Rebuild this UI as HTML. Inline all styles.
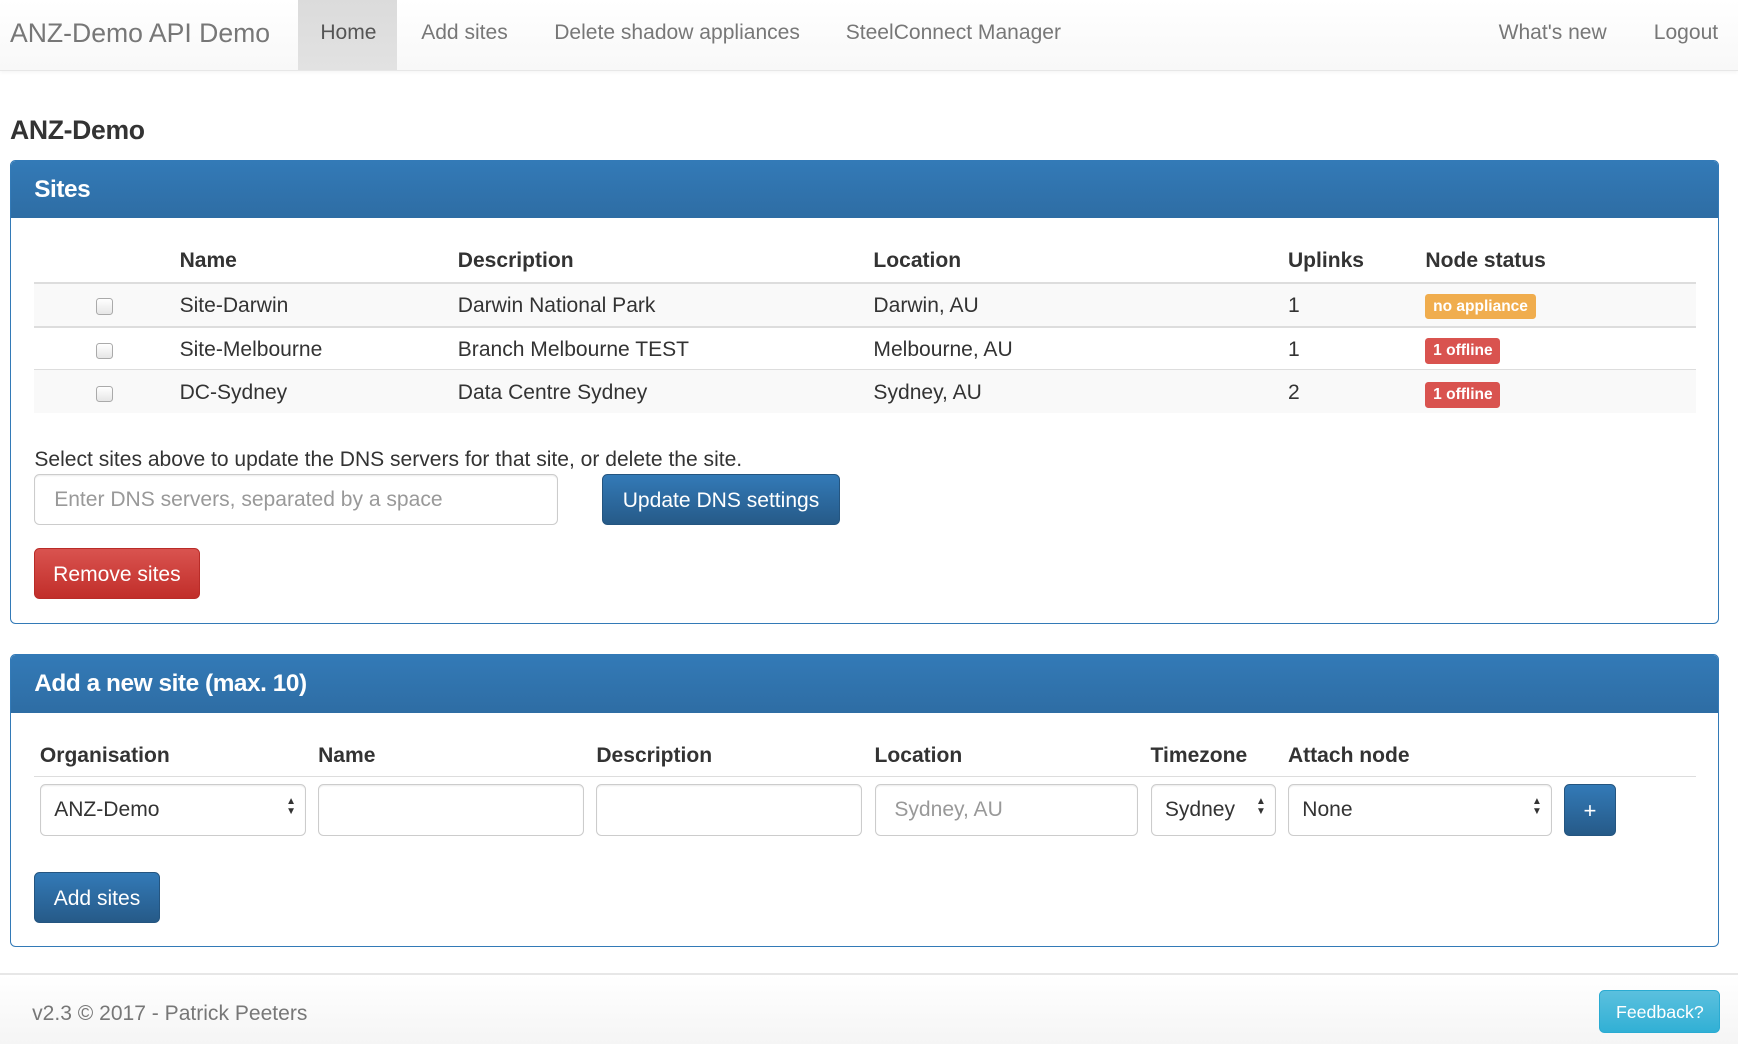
<!DOCTYPE html>
<html><head><meta charset="utf-8"><style>
html,body{margin:0;padding:0;}
body{width:1568px;height:940px;zoom:1.10842;font-family:"Liberation Sans",Arial,sans-serif;color:#333;font-size:19px;position:relative;overflow:hidden;background:#fff}
.a{position:absolute;white-space:nowrap}
.nav{position:absolute;left:0;top:0;width:1568px;height:63px;background:linear-gradient(#fff,#f8f8f8);border-bottom:1px solid #e7e7e7;box-shadow:0 1px 4px rgba(0,0,0,.06)}
.nav .a{top:19px;color:#777}
.panel{position:absolute;left:9px;width:1540px;border:1px solid #337ab7;border-radius:5px;overflow:hidden}
.ph{height:52px;background:linear-gradient(#337ab7,#2e6da4);color:#fff;font-size:22px;font-weight:bold;line-height:53px;padding-left:21px;letter-spacing:-0.4px}
.th{font-weight:bold}
.row{position:absolute;left:31px;width:1499px;height:39px;border-top:2px solid #ddd}
.cb{position:absolute;width:13px;height:13px;border:1px solid #aaa;border-radius:3px;background:linear-gradient(#fff,#e6e6e6)}
.lbl{position:absolute;color:#fff;font-weight:bold;font-size:14px;border-radius:3px;height:23px;line-height:23px;padding:0 7px}
.inp{position:absolute;height:44px;border:1px solid #ccc;border-radius:5px;background:#fff;box-sizing:border-box;box-shadow:inset 0 1px 1px rgba(0,0,0,.075);line-height:46px;padding-left:12px}
.btn{position:absolute;height:46px;border-radius:5px;color:#fff;line-height:47px;text-align:center;box-sizing:border-box}
.blue{background:linear-gradient(#337ab7,#265a88);border:1px solid #245580}
.arr{position:absolute;right:8px;top:11px;font-size:9px;line-height:9px;color:#333}
</style></head><body>
<div class="nav">
<div class="a" style="left:9px;top:16px;font-size:24px;color:#777">ANZ-Demo API Demo</div>
<div style="position:absolute;left:269px;top:0;width:89px;height:63px;background:linear-gradient(#dbdbdb,#e2e2e2)"></div>
<div class="a" style="left:289px;color:#555">Home</div>
<div class="a" style="left:380px">Add sites</div>
<div class="a" style="left:500px">Delete shadow appliances</div>
<div class="a" style="left:763px">SteelConnect Manager</div>
<div class="a" style="left:1352px">What's new</div>
<div class="a" style="left:1492px">Logout</div>
</div>
<div class="a" style="left:9px;top:104px;font-size:24px;font-weight:bold;color:#333;letter-spacing:-0.3px">ANZ-Demo</div>

<div class="panel" style="top:144px;height:417px"><div class="ph">Sites</div></div>
<div class="a th" style="left:162px;top:225px">Name</div>
<div class="a th" style="left:413px;top:225px">Description</div>
<div class="a th" style="left:788px;top:225px">Location</div>
<div class="a th" style="left:1162px;top:225px">Uplinks</div>
<div class="a th" style="left:1286px;top:225px">Node status</div>
<div class="row" style="top:254px;background:#f9f9f9"></div>
<div class="row" style="top:294px;"></div>
<div class="row" style="top:333px;background:#f9f9f9;border-top-width:1px"></div>
<div class="cb" style="left:87px;top:269px"></div>
<div class="cb" style="left:87px;top:309px"></div>
<div class="cb" style="left:87px;top:348px"></div>
<div class="a" style="left:162px;top:265px">Site-Darwin</div>
<div class="a" style="left:413px;top:265px">Darwin National Park</div>
<div class="a" style="left:788px;top:265px">Darwin, AU</div>
<div class="a" style="left:1162px;top:265px">1</div>
<div class="lbl" style="left:1286px;top:265px;background:#f0ad4e">no appliance</div>
<div class="a" style="left:162px;top:305px">Site-Melbourne</div>
<div class="a" style="left:413px;top:305px">Branch Melbourne TEST</div>
<div class="a" style="left:788px;top:305px">Melbourne, AU</div>
<div class="a" style="left:1162px;top:305px">1</div>
<div class="lbl" style="left:1286px;top:305px;background:#d9534f">1 offline</div>
<div class="a" style="left:162px;top:344px">DC-Sydney</div>
<div class="a" style="left:413px;top:344px">Data Centre Sydney</div>
<div class="a" style="left:788px;top:344px">Sydney, AU</div>
<div class="a" style="left:1162px;top:344px">2</div>
<div class="lbl" style="left:1286px;top:345px;background:#d9534f">1 offline</div>
<div class="a" style="left:31px;top:404px">Select sites above to update the DNS servers for that site, or delete the site.</div>
<div class="inp" style="left:31px;top:428px;width:472px;height:46px;color:#999;padding-left:17px">Enter DNS servers, separated by a space</div>
<div class="btn blue" style="left:543px;top:428px;width:215px">Update DNS settings</div>
<div class="btn" style="left:31px;top:494px;width:149px;background:linear-gradient(#d9534f,#c12e2a);border:1px solid #b92c28">Remove sites</div>

<div class="panel" style="top:590px;height:263px"><div class="ph">Add a new site (max. 10)</div></div>
<div class="a th" style="left:36px;top:671px">Organisation</div>
<div class="a th" style="left:287px;top:671px">Name</div>
<div class="a th" style="left:538px;top:671px">Description</div>
<div class="a th" style="left:789px;top:671px">Location</div>
<div class="a th" style="left:1038px;top:671px">Timezone</div>
<div class="a th" style="left:1162px;top:671px">Attach node</div>
<div style="position:absolute;left:31px;top:700px;width:1499px;height:1px;background:#ddd"></div>
<div class="inp" style="left:36px;top:707px;width:240px;height:47px">ANZ-Demo<div class="arr">▲<br>▼</div></div>
<div class="inp" style="left:287px;top:707px;width:240px;height:47px"></div>
<div class="inp" style="left:538px;top:707px;width:240px;height:47px"></div>
<div class="inp" style="left:789px;top:707px;width:238px;height:47px;color:#999;padding-left:17px">Sydney, AU</div>
<div class="inp" style="left:1038px;top:707px;width:113px;height:47px">Sydney<div class="arr">▲<br>▼</div></div>
<div class="inp" style="left:1162px;top:707px;width:238px;height:47px">None<div class="arr">▲<br>▼</div></div>
<div class="btn blue" style="left:1411px;top:707px;width:47px;height:47px;font-size:20px">+</div>
<div class="btn blue" style="left:31px;top:787px;width:113px">Add sites</div>

<div style="position:absolute;left:0;top:878px;width:1568px;height:62px;border-top:2px solid #e7e7e7;background:linear-gradient(#fff,#f5f5f5)"></div>
<div class="a" style="left:29px;top:904px;color:#777">v2.3 © 2017 - Patrick Peeters</div>
<div class="btn" style="left:1443px;top:893px;width:109px;height:39px;line-height:39px;font-size:16px;background:linear-gradient(#5bc0de,#31b0d5);border:1px solid #2aabd2">Feedback?</div>
</body></html>
